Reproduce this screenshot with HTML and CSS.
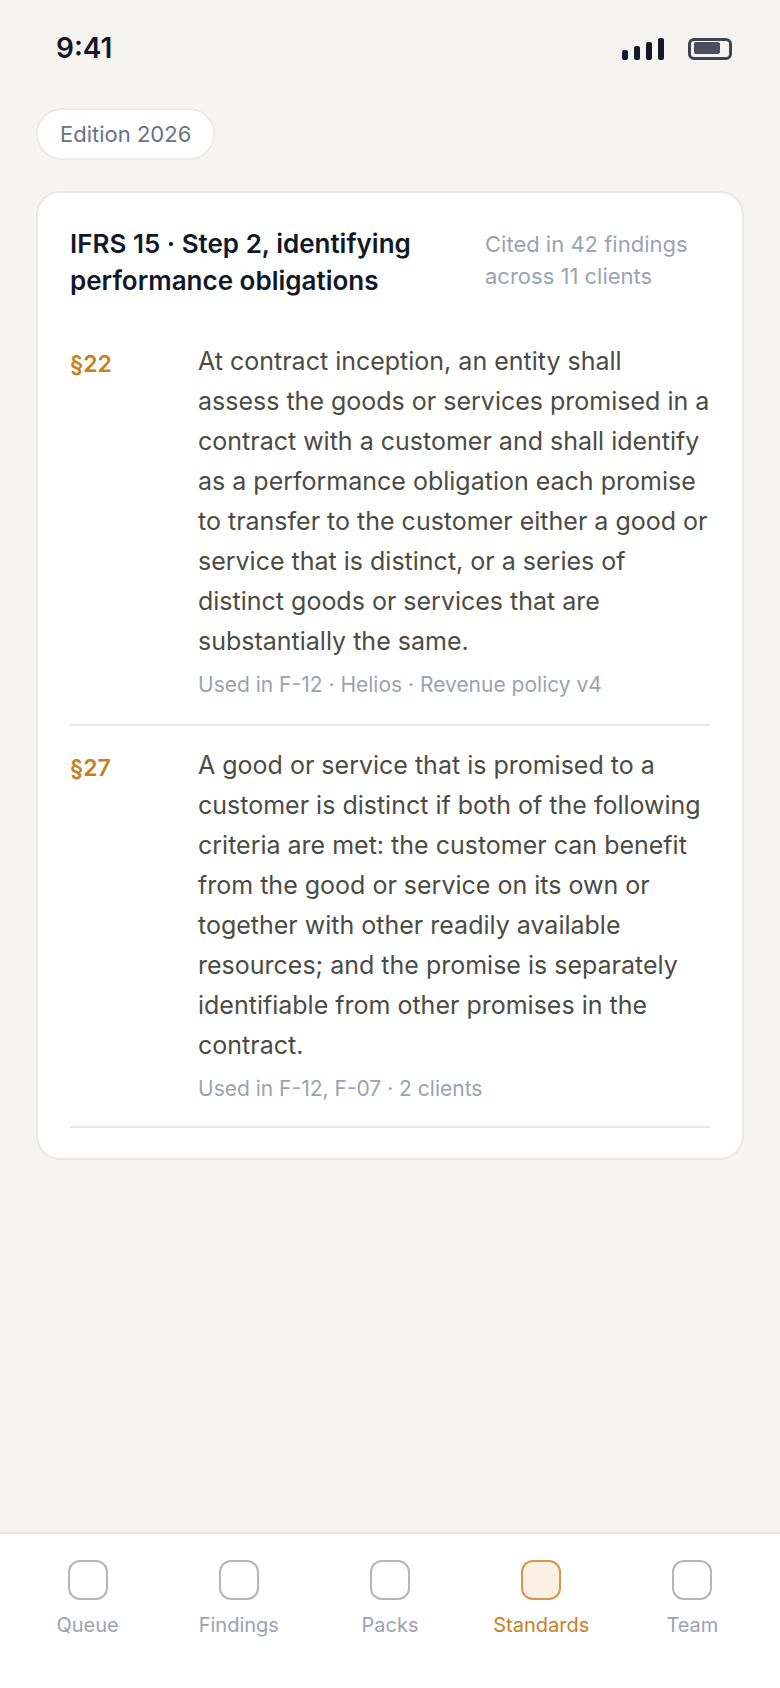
FILE: index.html
```html
<!DOCTYPE html>
<html lang="en">
<head>
<meta charset="utf-8">
<title>Standards</title>
<link rel="stylesheet" href="styles.css">
</head>
<body>
<div class="app">
  <header class="status">
    <span class="time">9:41</span>
    <div class="status-icons">
      <div class="signal"><i class="b1"></i><i class="b2"></i><i class="b3"></i><i class="b4"></i></div>
      <div class="battery"><i></i></div>
    </div>
  </header>
  <main class="content">
    <div class="pill">Edition 2026</div>
    <section class="card">
      <div class="card-head">
        <h1>IFRS 15 · Step 2, identifying performance obligations</h1>
        <p class="cited">Cited in 42 findings across 11 clients</p>
      </div>
      <article class="para">
        <div class="ref">§22</div>
        <div class="body">
          <p class="text">At contract inception, an entity shall assess the goods or services promised in a contract with a customer and shall identify as a performance obligation each promise to transfer to the customer either a good or service that is distinct, or a series of distinct goods or services that are substantially the same.</p>
          <p class="used">Used in F-12 · Helios · Revenue policy v4</p>
        </div>
      </article>
      <article class="para">
        <div class="ref">§27</div>
        <div class="body">
          <p class="text">A good or service that is promised to a customer is distinct if both of the following criteria are met: the customer can benefit from the good or service on its own or together with other readily available resources; and the promise is separately identifiable from other promises in the contract.</p>
          <p class="used">Used in F-12, F-07 · 2 clients</p>
        </div>
      </article>
    </section>
  </main>
  <nav class="tabs">
    <div class="tab"><span class="ico"></span><span>Queue</span></div>
    <div class="tab"><span class="ico"></span><span>Findings</span></div>
    <div class="tab"><span class="ico"></span><span>Packs</span></div>
    <div class="tab active"><span class="ico"></span><span>Standards</span></div>
    <div class="tab"><span class="ico"></span><span>Team</span></div>
  </nav>
</div>
</body>
</html>
```
FILE: styles.css
```css
* { box-sizing: border-box; margin: 0; padding: 0; }
html, body { height: 100%; }
body { font-family: Inter, "Liberation Sans", sans-serif; background: #f5f4f1; color: #0f172a; }
.app { height: 1688px; display: flex; flex-direction: column; }
.status { height: 96px; padding: 28px 48px 0 56px; display: flex; justify-content: space-between; align-items: flex-start; }
.time { font-size: 28px; font-weight: 600; line-height: 40px; color: #111827; }
.status-icons { display: flex; align-items: flex-end; gap: 24px; padding-top: 10px; }
.signal { display: flex; align-items: flex-end; gap: 6px; }
.signal i { display: block; width: 6px; background: #111827; border-radius: 2px; }
.b1 { height: 10px; } .b2 { height: 14px; } .b3 { height: 18px; } .b4 { height: 22px; }
.battery { width: 44px; height: 22px; border: 3px solid #3f4352; border-radius: 6px; padding: 1px 9px 3px 3px; }
.battery i { display: block; height: 100%; background: #4a4f5e; border-radius: 2px; }
.content { flex: 1; padding: 12px 36px 0; display: flex; flex-direction: column; align-items: flex-start; gap: 31px; }
.pill { height: 52px; padding: 0 22px; display: flex; align-items: center; background: #fff; border: 2px solid #eeece8; border-radius: 26px; font-size: 22px; color: #6b7280; }
.card { width: 100%; background: #fff; border: 2px solid #e9e8e5; border-radius: 24px; padding: 32px 32px 30px; }
.card-head { display: flex; justify-content: space-between; gap: 24px; margin-bottom: 22px; }
h1 { width: 356px; font-size: 26px; font-weight: 600; line-height: 37px; color: #111827; }
.cited { width: 225px; font-size: 22px; line-height: 32px; color: #9ca3af; padding-top: 3px; }
.para { display: grid; grid-template-columns: 104px 1fr; column-gap: 24px; padding: 20px 0 24px; border-bottom: 2px solid #e8e8e6; }
.para + .para { padding: 19px 0 22px; }
.ref { margin-top: 3px; font-size: 23px; font-weight: 600; line-height: 40px; color: #c8801f; }
.text { font-size: 25px; line-height: 40px; color: #4b4b45; }
.used { margin-top: 9px; font-size: 21px; line-height: 30px; color: #9ca3af; }
.tabs { height: 156px; padding: 26px 12px 0; background: #fff; border-top: 2px solid #e8e8e6; display: grid; grid-template-columns: repeat(5, 1fr); align-content: start; }
.tab { display: flex; flex-direction: column; align-items: center; gap: 11px; font-size: 20px; line-height: 28px; color: #9ca3af; }
.ico { width: 40px; height: 40px; border: 2px solid #b4b6ba; border-radius: 12px; }
.active { color: #c8801f; }
.active .ico { background: #faf0e4; border-color: #d8964a; }
```
